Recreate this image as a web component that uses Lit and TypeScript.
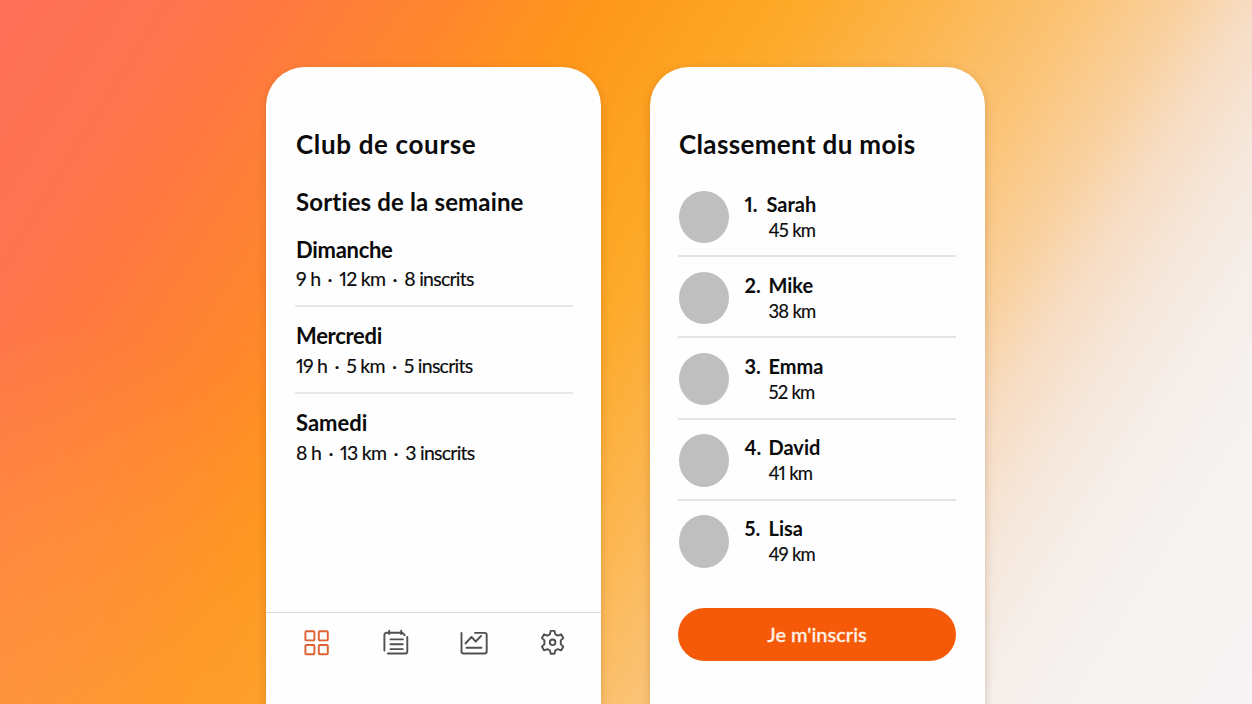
import { LitElement, css, html, svg } from "lit";
import { customElement, property } from "lit/decorators.js";
import { classMap } from "lit/directives/class-map.js";

interface Outing {
    day: string;
    details: string[];
}

interface Runner {
    name: string;
    distance: string;
}

const outings: Outing[] = [
    { day: "Dimanche", details: ["9 h", "12 km", "8 inscrits"] },
    { day: "Mercredi", details: ["19 h", "5 km", "5 inscrits"] },
    { day: "Samedi", details: ["8 h", "13 km", "3 inscrits"] },
];

const runners: Runner[] = [
    { name: "Sarah", distance: "45 km" },
    { name: "Mike", distance: "38 km" },
    { name: "Emma", distance: "52 km" },
    { name: "David", distance: "41 km" },
    { name: "Lisa", distance: "49 km" },
];

const icons = {
    grid: svg`
        <rect x="2.4" y="2.2" width="9" height="9.2" rx="1" />
        <rect x="15.8" y="2.2" width="9" height="9.2" rx="1" />
        <rect x="2.4" y="16" width="9" height="9.2" rx="1" />
        <rect x="15.8" y="16" width="9" height="9.2" rx="1" />
    `,
    list: svg`
        <path d="M2.4 21.5V6a2.2 2.2 0 0 1 2.2-2.2h15.900l2.200 2.400" />
        <path d="M7.200 1.800v3.200M19.200 1.800v3.200" />
        <path d="M25.300 8v14.700a1.800 1.800 0 0 1-1.800 1.800H5.800" />
        <path d="M8.500 10.400h12.300M8.500 15.300h12.300M8.500 20.100h12.300" />
    `,
    chart: svg`
        <path d="M1.500 3.900v18.600a2 2 0 0 0 2 2h21.200a2 2 0 0 0 2-2V5.900a2 2 0 0 0-2-2H15" />
        <path d="M5.500 14.500l6-6.600 4.200 4.600 5.300-5.500" />
        <path d="M6.500 18.700h15" />
    `,
    gear: svg`
        <path d="M11.700 1.900h3.800l.8 3.400 2.500 1.300 3.300-1.300 2.200 3.800-2.500 2.300v3.900l2.500 2.300-2.200 3.800-3.300-1.200-2.500 1.200-.8 3.300h-3.800l-.8-3.300-2.500-1.200-3.300 1.200-2.200-3.800 2.500-2.300v-3.900l-2.500-2.300 2.200-3.800 3.300 1.300 2.500-1.300z" />
        <circle cx="13.600" cy="13.300" r="2.800" />
    `,
};

type IconName = keyof typeof icons;

@customElement("nav-icon")
export class NavIcon extends LitElement {
    @property({ type: String })
    name: IconName = "grid";

    @property({ type: Boolean })
    active: boolean = false;

    render() {
        return html`
            <svg
                class=${classMap({ active: this.active })}
                viewBox="0 0 28 28"
                aria-hidden="true"
            >
                ${icons[this.name]}
            </svg>
        `;
    }

    static styles = css`
        :host {
            display: block;
            width: 28px;
            height: 28px;
        }

        svg {
            display: block;
            overflow: visible;
            fill: none;
            stroke: #505052;
            stroke-width: 1.9;
            stroke-linecap: round;
            stroke-linejoin: round;
        }

        svg.active {
            stroke: #df6030;
        }
    `;
}

@customElement("club-screen")
export class ClubScreen extends LitElement {
    render() {
        return html`
            <main>
                <h1>Club de course</h1>
                <h2>Sorties de la semaine</h2>
                ${outings.map(
                    (outing) => html`
                        <section>
                            <h3>${outing.day}</h3>
                            <p>
                                ${outing.details.map(
                                    (detail, index) => html`
                                        ${index
                                            ? html`<span class="dot">·</span>`
                                            : null}
                                        <span>${detail}</span>
                                    `
                                )}
                            </p>
                        </section>
                    `
                )}
            </main>
            <nav>
                <nav-icon name="grid" active></nav-icon>
                <nav-icon name="list"></nav-icon>
                <nav-icon name="chart"></nav-icon>
                <nav-icon name="gear"></nav-icon>
            </nav>
        `;
    }

    static styles = css`
        :host {
            display: flex;
            flex-direction: column;
        }

        main {
            flex: 1;
            padding: 61px 28px 0 29px;
        }

        h1,
        h2,
        h3,
        p {
            margin: 0;
            padding-left: 1px;
            white-space: nowrap;
        }

        h1 {
            font-size: 26px;
            line-height: 32px;
            font-weight: 700;
            letter-spacing: 0.65px;
        }

        h2 {
            margin-top: 27px;
            font-size: 24px;
            line-height: 30px;
            font-weight: 700;
            letter-spacing: 0.15px;
        }

        section {
            box-sizing: border-box;
            height: 87px;
            padding-top: 15px;
            border-bottom: 2px solid #e8e8e9;
        }

        h2 + section {
            padding-top: 19px;
            height: 90px;
        }

        section:last-child {
            border: none;
        }

        h3 {
            font-size: 22px;
            line-height: 28px;
            font-weight: 700;
            letter-spacing: -0.3px;
        }

        section:last-child h3 {
            letter-spacing: 0;
        }

        p {
            display: flex;
            margin-top: 2px;
            font-size: 19.5px;
            line-height: 28px;
            letter-spacing: -0.75px;
            font-variant-numeric: proportional-nums;
            -webkit-text-stroke: 0.15px currentColor;
        }

        h2 + section p {
            margin-top: 1px;
        }

        .dot {
            width: 19px;
            text-align: center;
        }

        nav {
            box-sizing: border-box;
            display: flex;
            justify-content: space-between;
            height: 92px;
            padding: 16px 34px 0 37px;
            border-top: 1px solid #d9d9da;
        }
    `;
}

@customElement("ranking-screen")
export class RankingScreen extends LitElement {
    render() {
        return html`
            <h1>Classement du mois</h1>
            <ol>
                ${runners.map(
                    (runner, index) => html`
                        <li>
                            <span class="avatar"></span>
                            <span class="rank">${index + 1}.</span>
                            <div>
                                <div class="name">${runner.name}</div>
                                <div class="distance">${runner.distance}</div>
                            </div>
                        </li>
                    `
                )}
            </ol>
            <button type="button">Je m'inscris</button>
        `;
    }

    static styles = css`
        :host {
            display: flex;
            flex-direction: column;
            padding: 61px 29px 0 28px;
        }

        h1 {
            margin: 0;
            padding-left: 1px;
            font-size: 26px;
            line-height: 32px;
            font-weight: 700;
            letter-spacing: 0.35px;
            white-space: nowrap;
        }

        ol {
            margin: 16px 0 0;
            padding: 0;
            list-style: none;
        }

        li {
            box-sizing: border-box;
            display: flex;
            height: 81.2px;
            padding: 14.6px 0 0 0.5px;
            border-bottom: 2px solid #e4e4e5;
        }

        li:last-child {
            border: none;
        }

        .avatar {
            width: 50px;
            height: 52.5px;
            border-radius: 50%;
            background: #bfbfbf;
        }

        .rank,
        .name {
            font-size: 20px;
            line-height: 26px;
            font-weight: 700;
        }

        .rank {
            width: 24px;
            margin-left: 16px;
            font-variant-numeric: proportional-nums;
        }

        li:first-child .name {
            margin-left: -2px;
        }

        .distance {
            font-size: 18.5px;
            line-height: 27px;
            letter-spacing: -0.9px;
            word-spacing: 0.5px;
            font-variant-numeric: proportional-nums;
            -webkit-text-stroke: 0.15px currentColor;
        }

        button {
            height: 53px;
            margin-top: 26px;
            padding: 0;
            border: none;
            border-radius: 27px;
            background: #f55a09;
            color: #fff1e6;
            font: 500 20px/53px Lato, sans-serif;
            -webkit-text-stroke: 0.3px currentColor;
        }
    `;
}

@customElement("app-root")
export class AppRoot extends LitElement {
    render() {
        return html`
            <club-screen class="screen"></club-screen>
            <ranking-screen class="screen"></ranking-screen>
        `;
    }

    static styles = css`
        :host {
            box-sizing: border-box;
            display: flex;
            justify-content: center;
            gap: 49px;
            height: 100vh;
            padding: 67px 1px 0 0;
            overflow: hidden;
            color: #0b0b0c;
            font-family: Lato, sans-serif;
            font-variant-ligatures: none;
            background: radial-gradient(
                    420px 380px at 0 100%,
                    rgba(255, 160, 75, 0.55),
                    rgba(255, 160, 75, 0)
                ),
                linear-gradient(
                    122deg,
                    #ff7159 0%,
                    #ff7450 10%,
                    #ff7b3e 18%,
                    #ff872c 27%,
                    #ff961b 35%,
                    #fda020 41%,
                    #fda928 47%,
                    #fcb650 56%,
                    #fbc478 64%,
                    #f9d1a0 70%,
                    #f7dcc2 74%,
                    #f6e7db 79%,
                    #f5eeea 84%,
                    #f6f3f1 90%,
                    #f6f4f4 100%
                );
        }

        .screen {
            box-sizing: border-box;
            width: 335px;
            border-radius: 39px 39px 0 0;
            background: #fefefe;
            box-shadow: 0 3px 9px rgba(120, 60, 0, 0.25);
        }
    `;
}
